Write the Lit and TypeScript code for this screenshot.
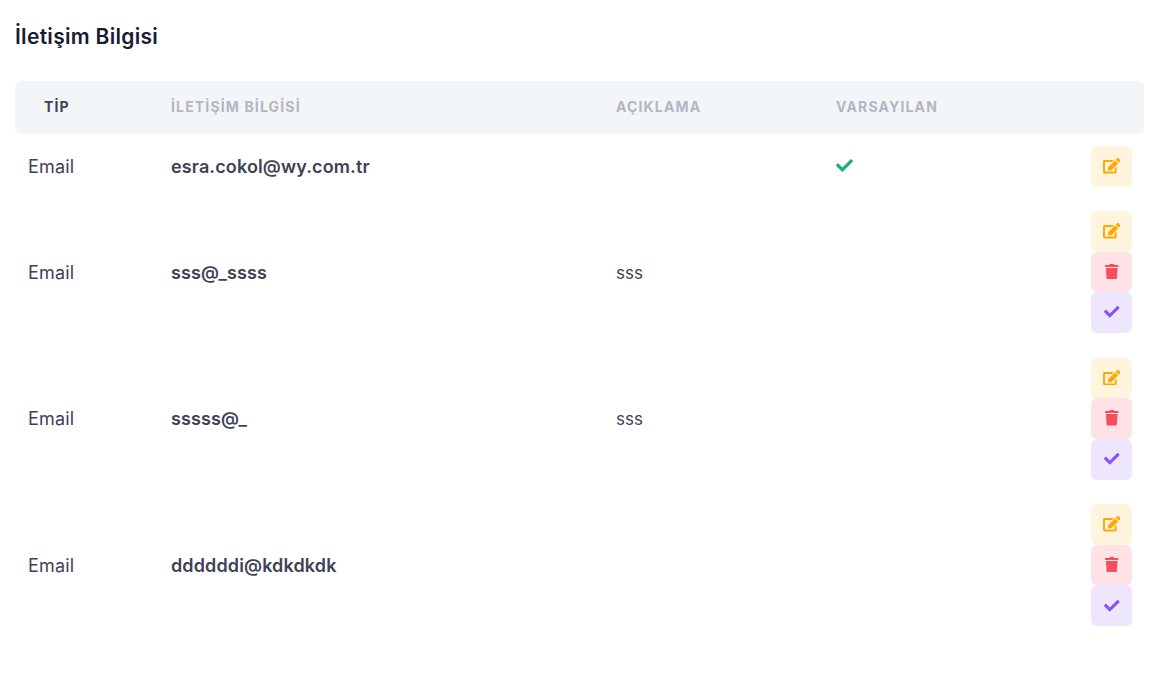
import { LitElement, html, css, svg } from "lit";
import { customElement } from "lit/decorators.js";

const editIcon = svg`<path d="M402.6 83.2l90.2 90.2c3.8 3.8 3.8 10 0 13.8L274.4 405.6l-92.8 10.3c-12.4 1.4-22.9-9.1-21.5-21.5l10.3-92.8L388.8 83.2c3.8-3.8 10-3.8 13.8 0zm162-22.9l-48.8-48.8c-15.2-15.2-39.9-15.2-55.2 0l-35.4 35.4c-3.8 3.8-3.8 10 0 13.8l90.2 90.2c3.8 3.8 10 3.8 13.8 0l35.4-35.4c15.2-15.3 15.2-40 0-55.2zM384 346.2V448H64V128h229.8c3.2 0 6.2-1.3 8.5-3.5l40-40c7.6-7.6 2.2-20.5-8.5-20.5H48C21.5 64 0 85.5 0 112v352c0 26.5 21.5 48 48 48h352c26.5 0 48-21.5 48-48V306.2c0-10.7-12.9-16-20.5-8.5l-40 40c-2.2 2.3-3.5 5.3-3.5 8.5z"/>`;
const trashIcon = svg`<path d="M432 32H312l-9.4-18.7A24 24 0 0 0 281.1 0H166.8a23.72 23.72 0 0 0-21.4 13.3L136 32H16A16 16 0 0 0 0 48v32a16 16 0 0 0 16 16h416a16 16 0 0 0 16-16V48a16 16 0 0 0-16-16zM53.2 467a48 48 0 0 0 47.9 45h245.8a48 48 0 0 0 47.9-45L416 128H32z"/>`;
const checkIcon = svg`<path d="M173.898 439.404l-166.4-166.4c-9.997-9.997-9.997-26.206 0-36.204l36.203-36.204c9.997-9.998 26.207-9.998 36.204 0L192 312.69 432.095 72.596c9.997-9.997 26.207-9.997 36.204 0l36.203 36.204c9.997 9.997 9.997 26.206 0 36.204l-294.4 294.401c-9.998 9.997-26.207 9.997-36.204-.001z"/>`;

const contacts = [
  { value: "esra.cokol@wy.com.tr", note: "", primary: true },
  { value: "sss@_ssss", note: "sss", primary: false },
  { value: "sssss@_", note: "sss", primary: false },
  { value: "ddddddi@kdkdkdk", note: "", primary: false },
];

@customElement("app-root")
export class AppRoot extends LitElement {
  static styles = css`
    :host {
      display: block;
      height: 687px;
      background: #fff;
      font-family: "Inter", "Noto Sans", sans-serif;
      color: #3f4254;
      overflow: hidden;
    }
    .page { padding: 24px 25px 0 15px; }
    h3 {
      margin: 0 0 30px;
      font-size: 21px;
      line-height: 25px;
      letter-spacing: 0.3px;
      font-weight: 600;
      color: #181c32;
      padding-bottom: 2px;
    }
    .row {
      display: grid;
      grid-template-columns: 156px 445px 220px 1fr 41px;
      align-items: center;
    }
    .head {
      height: 51px;
      padding: 0 12px 2px 0;
      background: #f3f6f9;
      border-radius: 6px;
      font-size: 14px;
      font-weight: 700;
      letter-spacing: 1.15px;
      color: #b5b5c3;
    }
    .head .tip { padding-left: 29px; color: #3f4254; }
    .body {
      padding: 12px 12px 12px 13px;
      grid-template-columns: 143px 445px 220px 1fr 41px;
      font-size: 17px;
      font-weight: 400;
      line-height: 24px;
    }
    .body + .body { padding-top: 12.3px; padding-bottom: 12.2px; }
    .text { padding-top: 1.5px; }
    .type { font-size: 18px; letter-spacing: 0.2px; }
    .value { font-size: 18px; font-weight: 600; letter-spacing: 0.13px; }
    .yes { display: flex; }
    .yes svg { width: 17px; height: 17px; fill: #1aae85; margin-top: -2px; }
    .actions { display: flex; flex-direction: column; }
    .btn {
      width: 41px;
      height: 40.7px;
      border: 0;
      padding: 0;
      border-radius: 6px;
      display: flex;
      align-items: center;
      justify-content: center;
    }
    .btn svg { height: 15.5px; width: 17.5px; margin-top: -1px; }
    .edit { background: #fff4de; fill: #ffa800; }
    .del { background: #ffe2e5; fill: #f64e60; }
    .ok { background: #eee5ff; fill: #8950fc; }
  `;

  private icon(box: number, body: unknown) {
    return html`<svg viewBox="0 0 ${box} 512" aria-hidden="true">${body}</svg>`;
  }

  render() {
    return html`<div class="page">
      <h3>İletişim Bilgisi</h3>
      <div class="row head">
        <div class="tip">TİP</div>
        <div>İLETİŞİM BİLGİSİ</div>
        <div>AÇIKLAMA</div>
        <div>VARSAYILAN</div>
        <div></div>
      </div>
      ${contacts.map(
        (c) => html`<div class="row body">
          <div class="text type">Email</div>
          <div class="text value">${c.value}</div>
          <div class="text">${c.note}</div>
          <div class="yes">${c.primary ? this.icon(512, checkIcon) : ""}</div>
          <div class="actions">
            <button class="btn edit">${this.icon(576, editIcon)}</button>
            ${c.primary
              ? ""
              : html`<button class="btn del">${this.icon(448, trashIcon)}</button>
                  <button class="btn ok">${this.icon(512, checkIcon)}</button>`}
          </div>
        </div>`
      )}
    </div>`;
  }
}
